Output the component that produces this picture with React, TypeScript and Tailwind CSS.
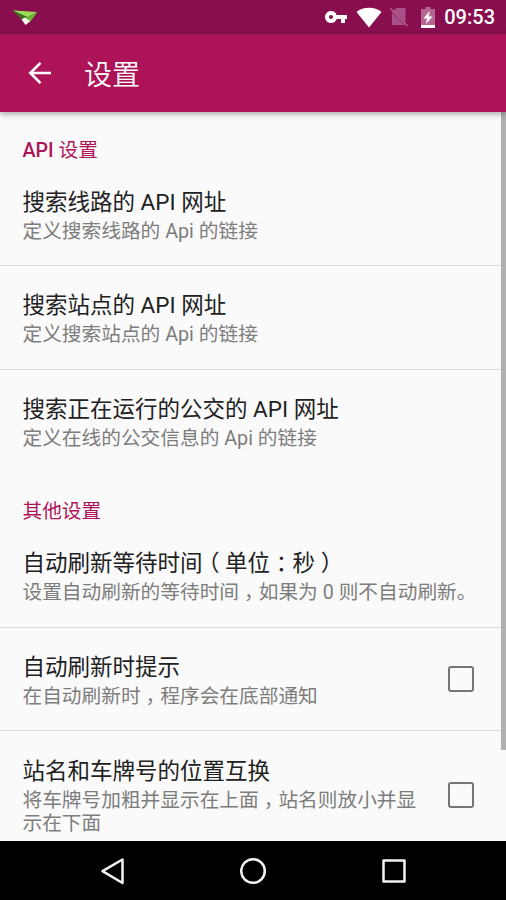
import type { ReactNode } from 'react';

type Preference = {
  title: ReactNode;
  summary: ReactNode;
  checkbox?: boolean;
};

// Full-width punctuation, trimmed to half width and centred in its cell
function Mark({ children }: { children: string }) {
  return <span className="px-[0.25em] [font-feature-settings:'halt']">{children}</span>;
}

const apiPreferences: Preference[] = [
  { title: '搜索线路的 API 网址', summary: '定义搜索线路的 Api 的链接' },
  { title: '搜索站点的 API 网址', summary: '定义搜索站点的 Api 的链接' },
  { title: '搜索正在运行的公交的 API 网址', summary: '定义在线的公交信息的 Api 的链接' },
];

const otherPreferences: Preference[] = [
  {
    title: (
      <>
        自动刷新等待时间<Mark>（</Mark>单位<Mark>：</Mark>秒<Mark>）</Mark>
      </>
    ),
    summary: (
      <>
        设置自动刷新的等待时间<Mark>，</Mark>如果为 0 则不自动刷新。
      </>
    ),
  },
  {
    title: '自动刷新时提示',
    summary: (
      <>
        在自动刷新时<Mark>，</Mark>程序会在底部通知
      </>
    ),
    checkbox: true,
  },
  {
    title: '站名和车牌号的位置互换',
    summary: (
      <>
        将车牌号加粗并显示在上面<Mark>，</Mark>站名则放小并显示在下面
      </>
    ),
    checkbox: true,
  },
];

function StatusBar() {
  return (
    <div className="flex h-[34px] shrink-0 items-center bg-[#880e4f] pl-[13px] pr-[11px] text-white">
      <svg className="h-[17px] w-[25px]" viewBox="0 0 25 17">
        <path d="M0 1.500 24 3.500 13.500 15Z" fill="#5a9a2c" />
        <path d="M0 1.500 24 3 14 8Z" fill="#9bdc58" />
        <path d="M0 1.500 9 10.500 14 8Z" fill="#3f6b24" />
        <path d="M8.500 10.500 12 8.500 17.500 12 12.500 16Z" fill="#f4fbe9" />
        <path d="M13 8.500 24 3.500 17.500 12.500Z" fill="#6fb534" />
      </svg>
      <div className="ml-auto flex items-center">
        <svg className="h-6 w-6" viewBox="0 0 24 24" fill="currentColor">
          <path d="M12.65 10A5.99 5.99 0 0 0 7 6c-3.31 0-6 2.69-6 6s2.69 6 6 6a5.99 5.99 0 0 0 5.65-4H17v4h4v-4h2v-4H12.65zM7 14c-1.1 0-2-.9-2-2s.9-2 2-2 2 .9 2 2-.9 2-2 2z" />
        </svg>
        <svg className="ml-2 h-[21px] w-[26px]" viewBox="0 0 26 21" fill="currentColor">
          <path d="M13 20.500 0.500 5C4 2.200 8 0.800 13 0.800S22 2.200 25.500 5Z" />
        </svg>
        <svg className="ml-[7px] h-[22px] w-[20px]" viewBox="0 0 20 22">
          <path d="M7.500 2H16.500V16.500L4.200 4.800ZM3 6.200 16 19H3Z" fill="#a9508a" />
          <path d="M1.500 2.500 18.500 20" stroke="#b66592" strokeWidth="1.500" />
        </svg>
        <svg className="ml-3 h-[21px] w-[14px]" viewBox="0 0 14 21">
          <path d="M4.500 0h5v2H14v19H0V2h4.500Z" fill="#b66592" />
          <path d="M0 18h14v3H0Z" fill="#fff" />
          <path d="M8.500 4 2.500 11.500H6L5 17 11.500 9.500H8Z" fill="#fff" />
        </svg>
        <span className="ml-[9px] text-[20px] leading-none font-medium">09:53</span>
      </div>
    </div>
  );
}

function Toolbar() {
  return (
    <header className="relative z-10 flex h-[78px] shrink-0 items-center bg-[#ad1457] pl-[28px] text-white shadow-[0_2px_6px_rgba(0,0,0,0.35)]">
      <svg className="h-6 w-6" viewBox="0 0 24 24" fill="none" stroke="currentColor" strokeWidth="2.600">
        <path d="M23 12H3M12.500 1.800 2.300 12 12.500 22.200" />
      </svg>
      <h1 className="ml-8 pt-1.5 text-[28px] leading-none font-[350]">设置</h1>
    </header>
  );
}

function PreferenceRow({ title, summary, checkbox }: Preference) {
  return (
    <li className="flex items-center border-b border-[#dcdcdc] pt-[25.2px] pb-[22.5px] pl-[22.5px] last:border-transparent">
      <div className="min-w-0 flex-1">
        <div className="text-[22.5px] leading-[28px] whitespace-nowrap text-[#212121]">{title}</div>
        <div className="mt-1 text-[19.7px] leading-[23px] text-[#7d7d7d]">{summary}</div>
      </div>
      {checkbox && (
        <div className="mr-8 mb-0.5 ml-[26px] h-[26px] w-[26px] shrink-0 rounded-[3px] border-[2.500px] border-[#757575]" />
      )}
    </li>
  );
}

function Category({ title, items }: { title: ReactNode; items: Preference[] }) {
  return (
    <section>
      <h2 className="h-[50.5px] pt-[26.5px] pl-[22.5px] text-[19.7px] leading-[24px] text-[#ad1457]">{title}</h2>
      <ul>
        {items.map((item, index) => (
          <PreferenceRow key={index} {...item} />
        ))}
      </ul>
    </section>
  );
}

function NavigationBar() {
  return (
    <nav className="flex h-[59px] shrink-0 items-center justify-between bg-black pr-[98px] pl-[100px]">
      <svg className="h-7 w-7" viewBox="0 0 28 28" fill="none" stroke="#f2f2f2" strokeWidth="2.500" strokeLinejoin="round">
        <path d="M22.500 2.500V26L2.500 14.200Z" />
      </svg>
      <svg className="h-7 w-7" viewBox="0 0 28 28" fill="none" stroke="#f2f2f2" strokeWidth="2.500">
        <circle cx="13" cy="14" r="11.800" />
      </svg>
      <svg className="h-7 w-7" viewBox="0 0 28 28" fill="none" stroke="#f2f2f2" strokeWidth="2.500" strokeLinejoin="round">
        <rect x="3.500" y="3.500" width="21" height="21" />
      </svg>
    </nav>
  );
}

export default function App() {
  return (
    <div className="flex h-[900px] w-[506px] flex-col overflow-hidden bg-[#fafafa] font-[Roboto,'Noto_Sans_CJK_SC',sans-serif]">
      <StatusBar />
      <Toolbar />
      <main className="relative min-h-0 flex-1 overflow-hidden">
        <Category
          title={
            <>
              <span className="font-medium">API</span> 设置
            </>
          }
          items={apiPreferences}
        />
        <Category title="其他设置" items={otherPreferences} />
        {/* Scroll indicator */}
        <div className="absolute top-0 right-0 h-[638px] w-[5px] bg-[#b0b0b0]" />
      </main>
      <NavigationBar />
    </div>
  );
}
